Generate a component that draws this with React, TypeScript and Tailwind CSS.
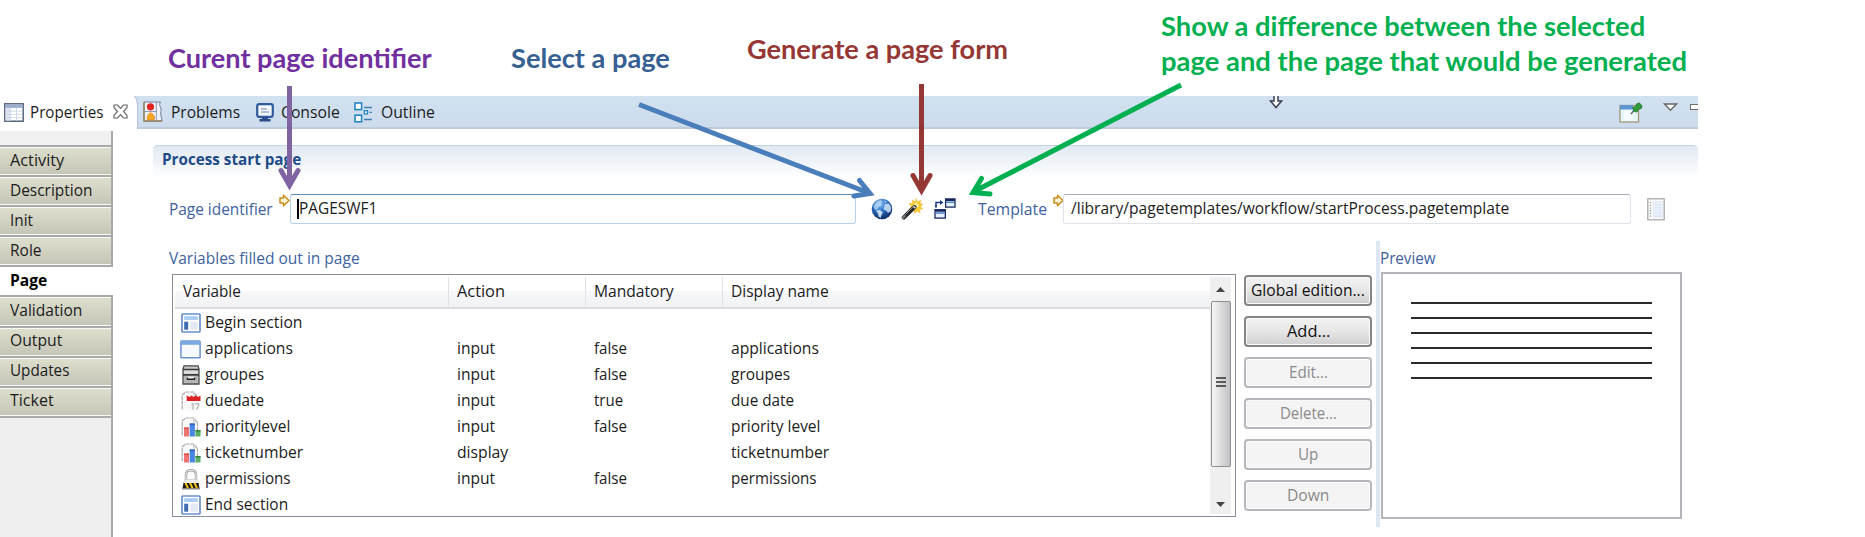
import { useLayoutEffect, useRef } from "react";
import type { ReactNode } from "react";
import clsx from "clsx";

/* A single line of text squeezed or stretched to the width of its box. */
function Fit({ className, children }: { className: string; children: ReactNode }) {
  const box = useRef<HTMLSpanElement>(null);
  const text = useRef<HTMLSpanElement>(null);
  useLayoutEffect(() => {
    if (!box.current || !text.current) return;
    const natural = text.current.offsetWidth;
    if (natural > 0) {
      text.current.style.transform = `translateY(-1px) scaleX(${box.current.clientWidth / natural})`;
    }
  }, []);
  return (
    <span ref={box} className={clsx("block shrink-0 whitespace-nowrap", className)}>
      <span ref={text} className="inline-block origin-left">
        {children}
      </span>
    </span>
  );
}

/* ---------- icons ---------- */

const PropertiesIcon = () => (
  <svg width="20" height="19" viewBox="0 0 20 19" className="shrink-0">
    <rect x="0.8" y="0.8" width="18.4" height="17.4" fill="#fff" stroke="#56657f" strokeWidth="1.5" />
    <rect x="1.5" y="1.5" width="17" height="3.4" fill="#9dafd0" />
    <rect x="1.5" y="5" width="4.6" height="12.5" fill="#dfe6f1" />
    <path d="M6.3 5v12.6M12.5 5v12.6M1.5 8.2h17M1.5 11.4h17M1.5 14.6h17" stroke="#c9d2e2" strokeWidth="0.8" />
  </svg>
);

const CloseIcon = () => (
  <svg width="15" height="15" viewBox="0 0 15 15" className="shrink-0">
    <path
      d="M1 1h3.6l2.9 3.4L10.4 1H14v2.6L10.6 7.5 14 11.4V14h-3.6L7.5 10.6 4.6 14H1v-2.6l3.4-3.9L1 3.6z"
      fill="#fff"
      stroke="#666"
      strokeWidth="1.2"
    />
  </svg>
);

const ProblemsIcon = () => (
  <svg width="20" height="21" viewBox="0 0 20 21" className="shrink-0">
    <path d="M1 1h16.5c-2.6 3 1.6 6 .4 9.500-.8 3 .6 6 1.300 9.500H1z" fill="#eef1f8" stroke="#6e7ca0" strokeWidth="1" />
    <path d="M1 1v19h18" fill="none" stroke="#9b8152" strokeWidth="1.400" />
    <path d="M13.300 1v19M1 10.500h13" stroke="#8590ae" strokeWidth="0.900" />
    <circle cx="7.500" cy="5.800" r="3.600" fill="#e02420" />
    <path d="M4.200 18.500v-3l2.500-3.500h2l2.600 3.500v3z" fill="#f6a821" stroke="#e58a12" strokeWidth="0.800" />
  </svg>
);

const ConsoleIcon = () => (
  <svg width="18" height="19" viewBox="0 0 18 19" className="shrink-0">
    <rect x="1.200" y="1.200" width="15.600" height="12.600" rx="2" fill="#f3f7fd" stroke="#2f5b9e" strokeWidth="2.200" />
    <path d="M5 6h6M5 9h8" stroke="#6d87b0" strokeWidth="1.200" />
    <path d="M6 14.500h6v1.500h2.500v2.500h-11V16H6z" fill="#2b4c86" />
  </svg>
);

const OutlineIcon = () => (
  <svg width="19" height="21" viewBox="0 0 19 21" className="shrink-0">
    <g fill="#fff" stroke="#2585c4" strokeWidth="1.600">
      <rect x="1" y="1" width="6.600" height="6.600" />
      <rect x="1" y="13.200" width="6.600" height="6.600" />
      <rect x="10.300" y="8.700" width="3.200" height="3.200" strokeWidth="1.300" />
    </g>
    <path d="M10 5.500h8M15.500 10.400h2.500M10 17.500h8" stroke="#3c7fae" strokeWidth="1.400" />
  </svg>
);

const PinViewIcon = () => (
  <svg width="24" height="21" viewBox="0 0 24 21" className="shrink-0">
    <rect x="1" y="3.500" width="18.500" height="16.500" fill="#e6f6fb" stroke="#a39775" strokeWidth="1.300" />
    <rect x="1" y="3" width="13" height="4.500" fill="#5f96d2" />
    <path d="M5 9h9v9H5z" fill="#fff" opacity=".7" />
    <path d="M12 12l4-5" stroke="#44606b" strokeWidth="1.300" />
    <path d="M13.500 5.500l3-1 1.500-3 2.500-.500 2.500 3-.500 2.200-3 1.300-1.500 2.500-2.500-.500z" fill="#2e9a3a" stroke="#1e7229" strokeWidth="0.800" />
  </svg>
);

const YellowArrow = () => (
  <svg width="11" height="13" viewBox="0 0 11 13" className="shrink-0">
    <path d="M1 4h3.500V1.300L10 6.500l-5.500 5.200V9H1z" fill="#fff6d8" stroke="#c98b1b" strokeWidth="1.500" strokeLinejoin="round" />
  </svg>
);

const GlobeIcon = () => (
  <svg width="22" height="22" viewBox="0 0 22 22" className="shrink-0">
    <defs>
      <radialGradient id="globe" cx="0.4" cy="0.25" r="0.8">
        <stop offset="0" stopColor="#8fc4f5" />
        <stop offset="0.45" stopColor="#2b6fc4" />
        <stop offset="1" stopColor="#0a2458" />
      </radialGradient>
    </defs>
    <circle cx="11" cy="11" r="10.300" fill="url(#globe)" />
    <path d="M2.500 8.500C4 4.500 7 2.500 10 2.300l1.500 1.500-2 1.700.8 2-2.800 1.500-1 2.500-2.500.500z" fill="#b9d9f6" opacity=".75" />
    <path d="M5 12.500l4-.5 3 2.500-1.500 2.500-1 3-2-1.500-.5-3z" fill="#d5e8f8" opacity=".9" />
    <path d="M14 6l4-.5 2.300 4.500-.8 3.500-2.500 1.500-2-2.500-2.500-1z" fill="#cfe4f8" opacity=".85" />
    <path d="M13 2.300l3 1.400-1.500 1.300z" fill="#d9ecfb" opacity=".7" />
  </svg>
);

const WandIcon = () => (
  <svg width="22" height="22" viewBox="0 0 22 22" className="shrink-0">
    <path
      d="M15 .5l1.300 3.700L19.800 2l-.9 3.800 2.800.2-2.200 2.500 2 2.500-3.200.3 1 3.500-3.500-1.800-1.800 2.500-1.300-3.500L8 11l2.500-2.500L8 5.500l3.700.2L11.500 2l3 2.200z"
      fill="#f9c82f"
      stroke="#f0ae1d"
      strokeWidth="0.500"
    />
    <circle cx="15" cy="7.500" r="2.500" fill="#fff0a0" />
    <path d="M2.800 19.500L13.500 9" stroke="#26262a" strokeWidth="4" strokeLinecap="round" />
    <path d="M4.500 16.500L12.800 8.300" stroke="#8e8e92" strokeWidth="1" />
    <path d="M1.800 20l2-2" stroke="#77777b" strokeWidth="2.200" strokeLinecap="round" />
    <path d="M12.500 8.300l1.800 1.800" stroke="#ddd" strokeWidth="1.600" />
  </svg>
);

const CompareIcon = () => (
  <svg width="22" height="21" viewBox="0 0 22 21" className="shrink-0">
    <g fill="#e4f0fa" stroke="#16285c" strokeWidth="1.300">
      <rect x="11.600" y="0.900" width="9.400" height="8.200" />
      <rect x="1" y="11.700" width="10.300" height="8.400" />
    </g>
    <path d="M11.600 2h9.400M1 12.800h10.300" stroke="#16285c" strokeWidth="1.800" />
    <path d="M12.300 4.300h8M1.700 15h9" stroke="#4c83c4" strokeWidth="1.600" />
    <path d="M2 9.500V4.500h6" fill="none" stroke="#1d3d84" strokeWidth="1.500" />
    <path d="M6 2l3.500 2.500L6 7z" fill="#1d3d84" />
    <path d="M.5 7.500h3L2 10z" fill="#1d3d84" />
  </svg>
);

const ListIcon = () => (
  <svg width="18" height="23" viewBox="0 0 18 23" className="shrink-0">
    <rect x="0.800" y="0.800" width="16.400" height="21" fill="#fdfdfd" stroke="#a9a9ad" strokeWidth="1.300" />
    <rect x="5.800" y="3.300" width="10" height="16.300" fill="#dfe9f8" />
    <path d="M5.800 5.500h10M5.800 8.200h10M5.800 10.900h10M5.800 13.600h10M5.800 16.300h10" stroke="#f2f6fc" strokeWidth="0.900" />
    <path d="M3.500 4v16" stroke="#a6a6a0" strokeWidth="1.600" strokeDasharray="1.300 1.400" />
  </svg>
);

const SectionIcon = () => (
  <svg width="20" height="20" viewBox="0 0 20 20">
    <rect x="1" y="1" width="18" height="18" rx="0.800" fill="#fff" stroke="#6a8fcb" strokeWidth="1.700" />
    <rect x="3.200" y="3.200" width="13.600" height="3.700" fill="#a5cbf6" />
    <rect x="3.200" y="8.700" width="4" height="8" fill="#3f6cb0" />
    <rect x="9.300" y="8.700" width="7.500" height="8" fill="#e3e8f5" />
  </svg>
);

const WindowIcon = () => (
  <svg width="21" height="19" viewBox="0 0 21 19">
    <rect x="0.900" y="0.900" width="19.200" height="16.800" rx="0.800" fill="#f7fafe" stroke="#6b93cf" strokeWidth="1.500" />
    <rect x="1.200" y="1.200" width="18.600" height="3.600" fill="#7aa7e0" />
  </svg>
);

const DrawerIcon = () => (
  <svg width="18" height="20" viewBox="0 0 18 20">
    <path d="M2 0.800h14l1 3.200v15H1V4z" fill="#c9c9c9" stroke="#4a4a4a" strokeWidth="1.300" />
    <path d="M1 4.500h16M1 9.800h16" stroke="#3a3a3a" strokeWidth="1.700" />
    <rect x="2.300" y="5.800" width="13.400" height="2.700" fill="#dedede" />
    <rect x="2.300" y="11" width="13.400" height="6.800" fill="#b4b4b4" />
    <rect x="5" y="11.500" width="8" height="3.500" fill="#efefef" />
    <path d="M5.500 12.500v1.800h7v-1.800" fill="none" stroke="#222" strokeWidth="1.400" />
  </svg>
);

const Sheet = () => (
  <path d="M1.200 18.300V4L4.500 1h8l4 4.500v13" fill="#fafafa" stroke="#a8a8a8" strokeWidth="1.200" strokeDasharray="4 .7" />
);

const CalendarIcon = () => (
  <svg width="20" height="20" viewBox="0 0 20 20">
    <Sheet />
    <path d="M12.500 1v4h4" fill="none" stroke="#c4c4c4" strokeWidth="0.800" />
    <rect x="5.500" y="8" width="14" height="11.500" fill="#f7f7f7" />
    <path d="M5.700 4.500l3 1.500 1.500-1.500 2.500 1.500 1.800-1.500 2.500 1.500 2.500-1.500V10H5.700z" fill="#dc1f23" />
    <path d="M10.500 13.500l1.500-1v6.200M14 12.800h4l-2.200 5.900" fill="none" stroke="#a3a3a3" strokeWidth="1" />
  </svg>
);

const ChartIcon = () => (
  <svg width="20" height="20" viewBox="0 0 20 20">
    <Sheet />
    <path d="M12.500 1v4h4" fill="none" stroke="#c4c4c4" strokeWidth="0.800" />
    <rect x="3" y="10.500" width="5" height="9" fill="#f07373" />
    <path d="M3 11.300h5" stroke="#dc5050" strokeWidth="1.600" />
    <rect x="8.700" y="6.500" width="5.200" height="13" fill="#4a86e0" />
    <path d="M8.700 7.300h5.200" stroke="#2e62bb" strokeWidth="1.600" />
    <rect x="14.500" y="13" width="5" height="6.500" fill="#5cad66" />
    <path d="M14.500 13.800h5" stroke="#33803d" strokeWidth="1.600" />
  </svg>
);

const LockIcon = () => (
  <svg width="18" height="21" viewBox="0 0 18 21">
    <path d="M4 11V5.500C4 2.500 6 1.200 9 1.200s5 1.300 5 4.300V11" fill="#fafafa" stroke="#9b9b9b" strokeWidth="2.400" />
    <path d="M4 11V5.500C4 2.500 6 1.200 9 1.200s5 1.300 5 4.300V11" fill="none" stroke="#f2f2f2" strokeWidth="1" />
    <path d="M3 10.500h12l1.800 4H1.200z" fill="#ececec" stroke="#bbb" strokeWidth="0.500" />
    <path d="M1.500 14h15l1 5.500H.5z" fill="#1f1a10" />
    <path d="M2.500 14l2.500 5.400h2.200L4.700 14zM7 14l2.500 5.400h2.200L9.200 14zM11.500 14l2.500 5.400h2.200L13.700 14z" fill="#f2c21c" />
    <path d="M0 19.900h18" stroke="#777" strokeWidth="1" />
  </svg>
);

/* ---------- data ---------- */

const sideTabs = [
  { label: "Activity", w: "w-[54px]" },
  { label: "Description", w: "w-[82px]" },
  { label: "Init", w: "w-[23px]" },
  { label: "Role", w: "w-[32px]" },
  { label: "Page", w: "w-[37px]", active: true },
  { label: "Validation", w: "w-[72px]" },
  { label: "Output", w: "w-[52px]" },
  { label: "Updates", w: "w-[59px]" },
  { label: "Ticket", w: "w-[44px]" },
];

const rows = [
  { icon: <SectionIcon />, name: "Begin section", nw: "w-[97px]" },
  { icon: <WindowIcon />, name: "applications", nw: "w-[88px]", action: "input", aw: "w-[38px]", mandatory: "false", mw: "w-[33px]", display: "applications", dw: "w-[88px]" },
  { icon: <DrawerIcon />, name: "groupes", nw: "w-[59px]", action: "input", aw: "w-[38px]", mandatory: "false", mw: "w-[33px]", display: "groupes", dw: "w-[59px]" },
  { icon: <CalendarIcon />, name: "duedate", nw: "w-[59px]", action: "input", aw: "w-[38px]", mandatory: "true", mw: "w-[29px]", display: "due date", dw: "w-[63px]" },
  { icon: <ChartIcon />, name: "prioritylevel", nw: "w-[85px]", action: "input", aw: "w-[38px]", mandatory: "false", mw: "w-[33px]", display: "priority level", dw: "w-[89px]" },
  { icon: <ChartIcon />, name: "ticketnumber", nw: "w-[98px]", action: "display", aw: "w-[51px]", display: "ticketnumber", dw: "w-[98px]" },
  { icon: <LockIcon />, name: "permissions", nw: "w-[86px]", action: "input", aw: "w-[38px]", mandatory: "false", mw: "w-[33px]", display: "permissions", dw: "w-[86px]" },
  { icon: <SectionIcon />, name: "End section", nw: "w-[83px]" },
];

const buttons = [
  { label: "Global edition...", w: "w-[114px]", enabled: true },
  { label: "Add...", w: "w-[43px]", enabled: true },
  { label: "Edit...", w: "w-[39px]", enabled: false },
  { label: "Delete...", w: "w-[57px]", enabled: false },
  { label: "Up", w: "w-[20px]", enabled: false },
  { label: "Down", w: "w-[42px]", enabled: false },
];

/* ---------- regions ---------- */

function TabBar() {
  return (
    <div className="flex h-[33px] w-[1698px] shrink-0 leading-[22px]">
      <div className="flex w-[134px] shrink-0 items-start pt-[6px] pl-1">
        <div className="pt-px"><PropertiesIcon /></div>
        <Fit className="ml-[6px] w-[73px]">Properties</Fit>
        <div className="ml-[10px] pt-[2px]"><CloseIcon /></div>
      </div>
      <div className="flex min-w-0 flex-1">
        <svg width="4" height="33" className="shrink-0">
          <path d="M0 0h4v33h-1V10Q3 2 0 0" fill="#cfdeed" />
          <path d="M0 0q3 2 3.500 10v23" fill="none" stroke="#b4c2d8" />
        </svg>
        <div className="flex min-w-0 flex-1 items-start overflow-hidden border-b-2 border-[#bfcadb] bg-linear-to-b from-[#d2e1f0] to-[#cddcec] pt-[5px] pl-[5px]">
          <ProblemsIcon />
          <Fit className="mt-px ml-[8px] w-[69px]">Problems</Fit>
          <div className="ml-[16px] shrink-0 pt-[2px]"><ConsoleIcon /></div>
          <Fit className="mt-px ml-[7px] w-[59px]">Console</Fit>
          <div className="ml-[14px] shrink-0 pt-px"><OutlineIcon /></div>
          <Fit className="mt-px ml-[8px] w-[54px]">Outline</Fit>
          <svg width="14" height="14" viewBox="0 0 14 14" className="-mt-[6px] ml-[834px] shrink-0">
            <path d="M5 0v6H1.500L7 12.500 12.500 6H9V0" fill="#fff" stroke="#3a3f52" strokeWidth="1.500" />
          </svg>
          <div className="ml-[336px] shrink-0 pt-px"><PinViewIcon /></div>
          <svg width="15" height="9" viewBox="0 0 15 9" className="mt-[2px] ml-[20px] shrink-0">
            <path d="M1.500 1h12l-6 6.200z" fill="#fff" stroke="#666" strokeWidth="1.300" />
          </svg>
          <div className="mt-[3px] ml-[12px] h-[6px] w-[14px] shrink-0 border-[1.500px] border-[#6a6a6a] bg-white" />
        </div>
      </div>
    </div>
  );
}

function SideTabs() {
  return (
    <div className="mt-[2px] flex w-[113px] shrink-0 flex-col">
      <div className="h-[14px] border-r-2 border-[#aaa] bg-[#f0f0f0]" />
      {sideTabs.map((t) => (
        <div
          key={t.label}
          className={clsx(
            "h-[30.1px] shrink-0 border-t-2 border-[#a9a9a9] leading-[22px]",
            t.active ? "bg-white pt-px font-bold text-black" : "border-r-2",
          )}
        >
          <div
            className={clsx(
              "flex h-full items-center pb-px pl-[10px]",
              !t.active && "border-y border-[#f8f8f4] bg-linear-to-b from-[#dedecd] to-[#c5c6b7]",
            )}
          >
            <Fit className={t.w}>{t.label}</Fit>
          </div>
        </div>
      ))}
      <div className="flex-1 border-t-2 border-r-2 border-[#aaa] bg-[#efefef]" />
    </div>
  );
}

function PageFields() {
  return (
    <div className="flex h-[32px] items-start pl-[16px] leading-[22px]">
      <Fit className="mt-[5px] w-[104px] text-[#3c62a0]">Page identifier</Fit>
      <div className="ml-[6px]"><YellowArrow /></div>
      <div className="flex h-[30px] w-[566px] shrink-0 items-center rounded-[3px] border-[1.500px] border-[#b5d2ea] border-t-[#5b8ab5] bg-white pl-[6px]">
        <div className="h-[20px] w-[1.500px] bg-black" />
        <Fit className="w-[78px]">PAGESWF1</Fit>
      </div>
      <div className="mt-[4px] ml-[15px]"><GlobeIcon /></div>
      <div className="mt-[4px] ml-[8px]"><WandIcon /></div>
      <div className="mt-[4px] ml-[11px]"><CompareIcon /></div>
      <Fit className="mt-[5px] ml-[22px] w-[69px] text-[#3c62a0]">Template</Fit>
      <div className="ml-[6px]"><YellowArrow /></div>
      <div className="-ml-px flex h-[30px] w-[568px] shrink-0 items-center rounded-[3px] border-[1.500px] border-[#dfe4ec] border-t-[#a9adb8] bg-white pl-[7px]">
        <Fit className="w-[438px]">/library/pagetemplates/workflow/startProcess.pagetemplate</Fit>
      </div>
      <div className="mt-[4px] ml-[16px]"><ListIcon /></div>
    </div>
  );
}

function HeaderCell({ label, box, w }: { label: string; box: string; w: string }) {
  return (
    <div className={clsx("flex shrink-0 items-center pl-[8px]", box)}>
      <Fit className={w}>{label}</Fit>
    </div>
  );
}

function VariableTable() {
  return (
    <div className="flex h-[243px] w-[1064px] shrink-0 border-[1.500px] border-[#878d99] bg-white">
      <div className="w-[1037px] shrink-0 overflow-hidden pl-[2px]">
        <div className="mt-[2px] flex h-[32px] border-b-2 border-[#dadbdf] bg-linear-to-b from-white from-45% via-[#f7f8fa] via-46% to-[#f1f2f4]">
          <HeaderCell label="Variable" box="w-[273px]" w="w-[58px]" />
          <HeaderCell label="Action" box="w-[137px] border-l border-[#dfe1e6]" w="w-[48px]" />
          <HeaderCell label="Mandatory" box="w-[137px] border-l border-[#dfe1e6]" w="w-[80px]" />
          <HeaderCell label="Display name" box="flex-1 border-l border-[#dfe1e6]" w="w-[98px]" />
        </div>
        <div className="pt-px leading-[22px]">
          {rows.map((r) => (
            <div key={r.name} className="flex h-[26px] items-center">
              <div className="flex w-[30px] shrink-0 items-center justify-center pl-px">{r.icon}</div>
              <div className="w-[252px] shrink-0"><Fit className={r.nw}>{r.name}</Fit></div>
              <div className="w-[137px] shrink-0">{r.action && <Fit className={r.aw!}>{r.action}</Fit>}</div>
              <div className="w-[137px] shrink-0">{r.mandatory && <Fit className={r.mw!}>{r.mandatory}</Fit>}</div>
              {r.display && <Fit className={r.dw!}>{r.display}</Fit>}
            </div>
          ))}
        </div>
      </div>
      <div className="mt-[2px] flex h-[237px] w-[21px] shrink-0 flex-col items-center bg-[#efefef]">
        <svg width="9" height="5" className="mt-[10px] shrink-0"><path d="M0 5L4.500 0 9 5z" fill="#444" /></svg>
        <div className="mt-[9px] flex h-[166px] w-[20px] shrink-0 flex-col items-center justify-center gap-[2px] rounded-[2px] border border-[#8e8e8e] bg-linear-to-r from-[#f7f7f7] via-[#dcdcde] to-[#c2c2c6] pb-[4px]">
          <div className="h-[2px] w-[10px] bg-[#5a5a5a]" />
          <div className="h-[2px] w-[10px] bg-[#5a5a5a]" />
          <div className="h-[2px] w-[10px] bg-[#5a5a5a]" />
        </div>
        <svg width="9" height="5" className="mt-[35px] shrink-0"><path d="M0 0h9L4.500 5z" fill="#444" /></svg>
      </div>
    </div>
  );
}

function ActionButtons() {
  return (
    <div className="mt-px ml-[8px] flex w-[128px] shrink-0 flex-col gap-[10.100px]">
      {buttons.map((b) => (
        <button
          key={b.label}
          className={clsx(
            "flex h-[31px] shrink-0 items-center justify-center rounded-[4px] border-2 leading-[22px]",
            b.enabled
              ? "border-[#858585] bg-linear-to-b from-[#f3f3f3] via-[#e6e6e6] via-50% to-[#cecece] text-[#111] shadow-[inset_0_0_0_1px_#fafafa]"
              : "border-[#b4b8bc] bg-[#f4f4f4] text-[#8a8a8a] shadow-[inset_0_0_0_1px_#fcfcfc]",
          )}
        >
          <Fit className={b.w}>{b.label}</Fit>
        </button>
      ))}
    </div>
  );
}

function Preview() {
  return (
    <div className="ml-[4px] flex h-[286px] shrink-0 border-l-4 border-[#dde7f3]">
      <div className="leading-[22px]">
        <Fit className="mt-[7px] w-[56px] text-[#3c62a0]">Preview</Fit>
        <div className="mt-[2px] ml-px flex h-[247px] w-[301px] flex-col gap-[13.100px] border-2 border-[#b4b4ba] bg-white px-[28px] pt-[28px]">
          {[0, 1, 2, 3, 4, 5].map((n) => (
            <div key={n} className="h-[2px] shrink-0 bg-[#2b2b2b]" />
          ))}
        </div>
      </div>
    </div>
  );
}

function Callouts() {
  return (
    <>
      <div className="font-['Lato',sans-serif] text-[26px] leading-[30px] font-bold">
        <div className="absolute top-[44px] left-[168px] text-[#7030a0]"><Fit className="w-[264px]">Curent page identifier</Fit></div>
        <div className="absolute top-[44px] left-[511px] text-[#376092]"><Fit className="w-[159px]">Select a page</Fit></div>
        <div className="absolute top-[35px] left-[747px] text-[#953735]"><Fit className="w-[261px]">Generate a page form</Fit></div>
        <div className="absolute top-[10px] left-[1161px] leading-[35px] text-[#00b050]">
          <Fit className="w-[484px]">Show a difference between the selected</Fit>
          <Fit className="w-[526px]">page and the page that would be generated</Fit>
        </div>
      </div>
      <svg width="1865" height="537" className="pointer-events-none absolute top-0 left-0" fill="none" strokeWidth="5">
        <g stroke="#8064a2">
          <path d="M289.500 86v100" />
          <path d="M281 170.500l8.500 15 8.500-15" strokeLinecap="round" />
        </g>
        <g stroke="#4a7ebb">
          <path d="M639 104.500L869 193" />
          <path d="M859.500 180.500L870 193.500l-16 2.500" strokeLinecap="round" />
        </g>
        <g stroke="#953735">
          <path d="M921.500 84v106" />
          <path d="M913 175.500l8.500 15 8.500-15" strokeLinecap="round" />
        </g>
        <g stroke="#00b050">
          <path d="M1181 85L973 192" />
          <path d="M981.500 178.500L973 192.500l17 1.500" strokeLinecap="round" />
        </g>
      </svg>
    </>
  );
}

export default function App() {
  return (
    <div className="relative flex h-[537px] w-[1865px] flex-col overflow-hidden bg-white pt-24 font-['Open_Sans','Noto_Sans',sans-serif] text-[16px] text-[#1c1c1c]">
      <TabBar />
      <div className="flex flex-1">
        <SideTabs />
        <div className="ml-[40px] w-[1545px] pt-[16px]">
          <div className="h-[33px] rounded-t-[5px] border-t-[1.500px] border-[#c3d3e4] bg-linear-to-b from-[#e1e9f2] to-white pt-[3px] pl-[9px] leading-[22px]">
            <Fit className="w-[139px] font-bold text-[#1f4c87]">Process start page</Fit>
          </div>
          <div className="pt-[16px]"><PageFields /></div>
          <div className="mt-[15px] flex">
            <div>
              <Fit className="mt-[6px] ml-[16px] w-[191px] text-[#3c62a0]">Variables filled out in page</Fit>
              <div className="mt-[3px] ml-[19px] flex">
                <VariableTable />
                <ActionButtons />
              </div>
            </div>
            <Preview />
          </div>
        </div>
      </div>
      <Callouts />
    </div>
  );
}
